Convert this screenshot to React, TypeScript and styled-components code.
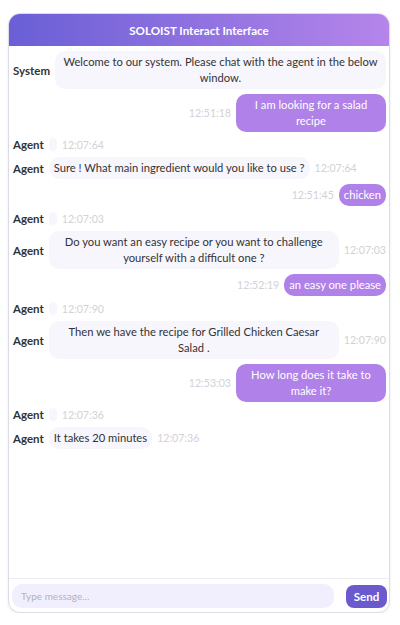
import React from "react";
import styled, { createGlobalStyle } from "styled-components";

const Global = createGlobalStyle`
  body { margin: 0; background: #fff; font-family: "Lato", "Noto Sans", sans-serif; }
  * { box-sizing: border-box; }
`;

const Frame = styled.div`
  margin: 13px 0 0 8px;
  width: 382px;
  height: 600px;
  border: 1px solid #dcdbe6;
  border-radius: 12px;
  overflow: hidden;
  display: flex;
  flex-direction: column;
  box-shadow: 0 1px 3px rgba(0, 0, 0, 0.08);
`;

const Header = styled.div`
  height: 32px;
  flex: none;
  display: flex;
  align-items: center;
  justify-content: center;
  background: linear-gradient(90deg, #6a5fd6, #b585ea);
  color: #fff;
  font-weight: 700;
  font-size: 11.6px;
`;

const Messages = styled.div`
  flex: 1;
  padding: 5px 3px 0 4px;
  display: flex;
  flex-direction: column;
  gap: 5px;
  font-size: 11.2px;
`;

const Row = styled.div<{ $mine?: boolean }>`
  display: flex;
  align-items: center;
  justify-content: ${(p) => (p.$mine ? "flex-end" : "flex-start")};
  gap: 5px;
  min-height: 15px;
`;

const Label = styled.span`
  flex: none;
  font-weight: 700;
  color: #333;
  font-size: 11.5px;
  line-height: 13px;
`;

const Bubble = styled.div<{ $mine?: boolean; $empty?: boolean }>`
  flex: 0 1 auto;
  min-width: 0;
  max-width: ${(p) => (p.$mine ? "150px" : "none")};
  padding: ${(p) => (p.$empty ? "0 4px" : "3px 5px")};
  min-height: ${(p) => (p.$empty ? "13px" : "auto")};
  border-radius: 10px;
  background: ${(p) => (p.$mine ? "#b081e8" : "#f7f6fd")};
  color: ${(p) => (p.$mine ? "#fff" : "#333")};
  line-height: 16px;
  text-align: center;
`;

const Time = styled.span`
  flex: none;
  color: #d2d2d6;
  font-size: 10.6px;
`;

const Footer = styled.div`
  flex: none;
  border-top: 1px solid #ececf2;
  padding: 5px 2px 4px 3px;
  display: flex;
  align-items: center;
  gap: 12px;
`;

const Input = styled.input`
  flex: 1;
  height: 24px;
  border: none;
  outline: none;
  border-radius: 10px;
  background: #f1effd;
  padding: 0 9px;
  font-family: inherit;
  font-size: 10px;
  color: #333;
  &::placeholder { color: #b3b2be; }
`;

const SendButton = styled.button`
  flex: none;
  width: 41px;
  height: 23px;
  border: none;
  border-radius: 8px;
  background: #6a5acd;
  color: #fff;
  font-family: inherit;
  font-weight: 700;
  font-size: 11.5px;
  padding: 0;
`;

type Msg = { who: "System" | "Agent" | "me"; text?: string; time?: string };

const msgs: Msg[] = [
  { who: "System", text: "Welcome to our system. Please chat with the agent in the below window." },
  { who: "me", text: "I am looking for a salad recipe", time: "12:51:18" },
  { who: "Agent", time: "12:07:64" },
  { who: "Agent", text: "Sure ! What main ingredient would you like to use ?", time: "12:07:64" },
  { who: "me", text: "chicken", time: "12:51:45" },
  { who: "Agent", time: "12:07:03" },
  { who: "Agent", text: "Do you want an easy recipe or you want to challenge yourself with a difficult one ?", time: "12:07:03" },
  { who: "me", text: "an easy one please", time: "12:52:19" },
  { who: "Agent", time: "12:07:90" },
  { who: "Agent", text: "Then we have the recipe for Grilled Chicken Caesar Salad\u00a0.", time: "12:07:90" },
  { who: "me", text: "How long does it take to make it?", time: "12:53:03" },
  { who: "Agent", time: "12:07:36" },
  { who: "Agent", text: "It takes 20 minutes", time: "12:07:36" },
];

export default function App() {
  return (
    <>
      <Global />
      <Frame>
        <Header>SOLOIST Interact Interface</Header>
        <Messages>
          {msgs.map((m, i) =>
            m.who === "me" ? (
              <Row key={i} $mine>
                <Time>{m.time}</Time>
                <Bubble $mine>{m.text}</Bubble>
              </Row>
            ) : (
              <Row key={i}>
                <Label>{m.who}</Label>
                <Bubble $empty={!m.text}>{m.text}</Bubble>
                {m.time && <Time>{m.time}</Time>}
              </Row>
            )
          )}
        </Messages>
        <Footer>
          <Input placeholder="Type message..." autoFocus />
          <SendButton>Send</SendButton>
        </Footer>
      </Frame>
    </>
  );
}
